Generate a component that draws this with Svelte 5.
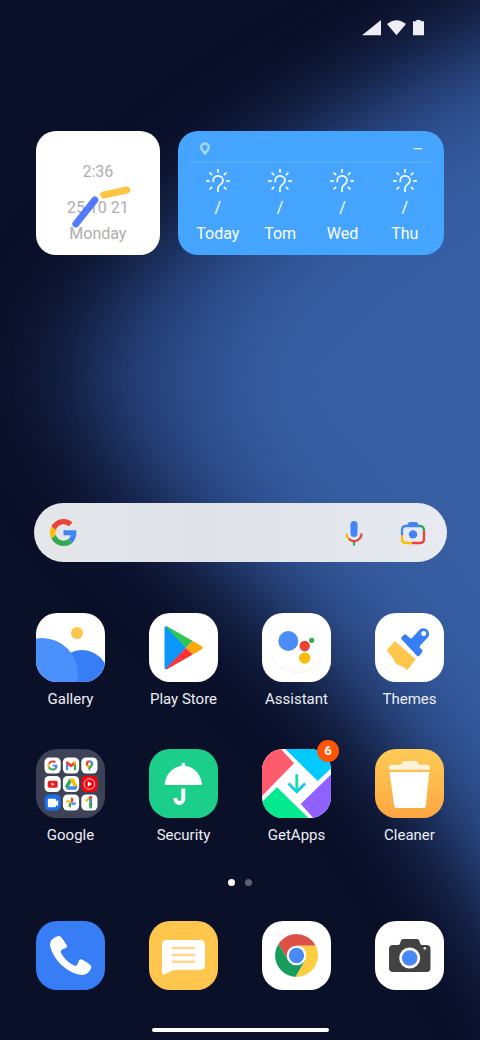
<script>
  const days = ['Today', 'Tom', 'Wed', 'Thu'];
  const apps = [
    { id: 'gallery', label: 'Gallery', bg: '#fff' },
    { id: 'play', label: 'Play Store', bg: '#fff' },
    { id: 'assistant', label: 'Assistant', bg: '#fff' },
    { id: 'themes', label: 'Themes', bg: '#fff' },
    { id: 'google', label: 'Google', bg: '#3e4256' },
    { id: 'security', label: 'Security', bg: '#1bce8a' },
    { id: 'getapps', label: 'GetApps', bg: '#fff', badge: 6 },
    { id: 'cleaner', label: 'Cleaner', bg: 'linear-gradient(#fdcb55, #fea742)' }
  ];
  const dock = [
    { id: 'phone', label: 'Phone', bg: '#377df6' },
    { id: 'messages', label: 'Messages', bg: '#fec64c' },
    { id: 'chrome', label: 'Chrome', bg: '#fff' },
    { id: 'camera', label: 'Camera', bg: '#fff' }
  ];
  const rays = [180, 225, 270, 315, 0, 135, 45];
</script>

{#snippet googleG()}
  <path fill="#ea4335" d="M24 9.5c3.54 0 6.71 1.22 9.21 3.6l6.85-6.85C35.9 2.38 30.47 0 24 0 14.62 0 6.51 5.38 2.56 13.22l7.98 6.19C12.43 13.72 17.74 9.5 24 9.5z" />
  <path fill="#4285f4" d="M46.98 24.55c0-1.57-.15-3.09-.38-4.55H24v9.02h12.94c-.58 2.96-2.26 5.48-4.78 7.18l7.73 6c4.51-4.18 7.09-10.36 7.09-17.65z" />
  <path fill="#fbbc05" d="M10.53 28.59c-.48-1.45-.76-2.99-.76-4.59s.27-3.14.76-4.59l-7.98-6.19C.92 16.46 0 20.12 0 24c0 3.88.92 7.54 2.56 10.78l7.97-6.19z" />
  <path fill="#34a853" d="M24 48c6.48 0 11.93-2.13 15.89-5.81l-7.73-6c-2.15 1.45-4.92 2.3-8.16 2.3-6.26 0-11.57-4.22-13.47-9.91l-7.98 6.19C6.51 42.62 14.62 48 24 48z" />
{/snippet}

{#snippet art(id)}
  {#if id === 'gallery'}
    <circle cx="46" cy="63" r="26" fill="#377df6" />
    <circle cx="6" cy="61" r="36" fill="#4b91fe" />
    <circle cx="41" cy="20" r="6" fill="#fcc54c" />
  {:else if id === 'play'}
    <path d="M15.500 15.500q0-3 2.800-1.800L37 34.700 18.300 56q-2.800 1-2.800-2z" fill="#0a96fa" />
    <path d="M16.600 13.600q1-.6 2.200.1L43.800 28 37 34.700z" fill="#2fc655" />
    <path d="M16.600 55.900q1 .6 2.200-.1L43.800 41.500 37 34.700z" fill="#fd3338" />
    <path d="M43.800 28l8.700 5q2.400 1.700 0 3.500l-8.700 5-6.800-6.800z" fill="#fba70f" />
  {:else if id === 'assistant'}
    <path d="M8.500 40a27 27 0 0 0 52 0" fill="none" stroke="#f1f1f1" stroke-width="1" />
    <circle cx="26.300" cy="28" r="10" fill="#4b8cf5" />
    <circle cx="42.700" cy="33" r="5.200" fill="#e94537" />
    <circle cx="49.700" cy="27.300" r="2.600" fill="#34a853" />
    <circle cx="42.700" cy="45" r="5.700" fill="#fabb0b" />
  {:else if id === 'themes'}
    <path d="M20 28l20.700 18.300-8.400 11-2.600-2.600q-2.200-.5-4.200-1.900l-3.500-1.600q-2-.7-2.700-3.100-.7-2.500-2.800-4.600L11.700 37.300z" fill="#fec64c" />
    <path d="M26.300 26q-.5-1.200.6-2.200l2-1.900q1.300-1.200 2.600 0l3.400 3.100q1.300 1 2.400-.3l7.400-8.100a5.600 5.600 0 0 1 8 7.800l-7.600 8.300q-1 1.200 0 2.200l1.600 1.400q1.400 1.400.3 2.900L44.200 43q-1 .9-2 .1z" fill="#377df6" />
    <circle cx="48.700" cy="20.400" r="2.500" fill="#fff" />
  {:else if id === 'google'}
    {#each [0, 1, 2, 3, 4, 5, 6, 7, 8] as n}
      <rect x={8.5 + (n % 3) * 18.4} y={8.4 + Math.floor(n / 3) * 18.5} width="16.200" height="16.200" rx="4.800" fill={n === 5 ? '#f5060b' : n === 6 ? '#1a6fe8' : '#fff'} />
    {/each}
    <g transform="translate(11.500 11.400) scale(.213)">{@render googleG()}</g>
    <g transform="translate(30 12)">
      <path d="M0 1.500V9h2.200V4.500z" fill="#4285f4" />
      <path d="M10 1.500V9H7.800V4.500z" fill="#34a853" />
      <path d="M0 1q1-1.300 2.200-.3L5 3 7.800.7Q9 0 10 1v1.700L5 6.500 0 2.700z" fill="#ea4335" />
      <path d="M7.800.7Q9 0 10 1v1.700L7.800 4.400z" fill="#fbbc05" />
    </g>
    <g transform="translate(49.700 11.200)">
      <path d="M0 3.700A3.700 3.700 0 0 1 3.700 0v3.700L.8 6.100Q0 5 0 3.700z" fill="#ea4335" />
      <path d="M3.700 0a3.700 3.700 0 0 1 3.700 3.700L3.700 3.700z" fill="#4285f4" />
      <path d="M7.400 3.700Q7.400 5 6.400 6.200 4.500 8 3.700 11 3 9 2.200 7.900L5 3.700z" fill="#34a853" />
      <path d="M.8 6.100L3.400 3.500 5 5 2.200 7.900z" fill="#fbbc05" />
      <circle cx="3.700" cy="3.700" r="1.300" fill="#fff" />
    </g>
    <rect x="11.700" y="31.700" width="10" height="7" rx="1.800" fill="#ed1c1c" />
    <path d="M15.700 33.500v3.300l2.900-1.600z" fill="#fff" />
    <g transform="translate(29 29.600)">
      <path d="M4.400 0L0 7.600l2 3.500 4.500-7.600z" fill="#34a853" />
      <path d="M4.400 0h4l4.400 7.600h-4z" fill="#fbbc05" />
      <path d="M4 7.600h8.800l-2 3.500H2z" fill="#4285f4" />
    </g>
    <circle cx="53.400" cy="35" r="5.300" fill="none" stroke="#fff" stroke-width=".8" />
    <path d="M51.800 32.300v5.400l4.300-2.700z" fill="#fff" />
    <path d="M11.800 51q0-1.300 1.300-1.300h5.700q1.300 0 1.300 1.300v1.500l2-1.700v6.600l-2-1.700V57q0 1.300-1.300 1.300h-5.700q-1.300 0-1.300-1.300z" fill="#fff" />
    <path d="M35 53.500v-5a2.500 2.500 0 0 1 0 5z" fill="#ea4335" />
    <path d="M35 53.500h5a2.500 2.500 0 0 1-5 0z" fill="#4285f4" />
    <path d="M35 53.500v5a2.500 2.500 0 0 1 0-5z" fill="#34a853" />
    <path d="M35 53.500h-5a2.500 2.500 0 0 1 5 0z" fill="#fbbc05" />
    <path d="M50.500 51.500l4.500-3" stroke="#fbbc05" stroke-width="2.600" stroke-linecap="round" />
    <path d="M54.700 49v9" stroke="#4285f4" stroke-width="2.800" stroke-linecap="round" />
    <path d="M54.700 54v4" stroke="#34a853" stroke-width="2.800" stroke-linecap="round" />
    <path d="M54 48.500h1" stroke="#ea4335" stroke-width="2.500" stroke-linecap="round" />
  {:else if id === 'security'}
    <path d="M16.800 36q-1.300 0-1.100-1.500C17 24.500 24.500 17.700 32.500 17v-1.300a1.900 1.900 0 0 1 3.800 0V17C44.300 17.700 51.700 24.500 53 34.500q.2 1.500-1.100 1.500z" fill="#fff" />
    <path d="M34.300 39.400V50a3.900 3.900 0 0 1-7.800 0v-1" fill="none" stroke="#fff" stroke-width="4" />
  {:else if id === 'getapps'}
    <path d="M0 0h19l13 14.300L0 47z" fill="#fe5c6c" />
    <path d="M23.300 0l32.400 32L70 18.500V0z" fill="#03cafe" />
    <path d="M70 24.500L38.700 55l13.500 15H70z" fill="#8f61fe" />
    <path d="M15 38.300L0 53v17h47.500z" fill="#03e98f" />
    <path d="M26.500 34.500l8.300 8.300 8.300-8.300" fill="none" stroke="#14c8ec" stroke-width="2.800" />
    <path d="M34.800 25.300v17" fill="none" stroke="#13e0a2" stroke-width="2.800" />
  {:else if id === 'cleaner'}
    <path d="M13.800 20.800v-2.300q0-2.700 3-2.700h8.400q1 0 1.500-1.200l.5-1.200q.6-1.300 2-1.300h11.600q1.400 0 2 1.300l.5 1.200q.5 1.200 1.500 1.200H52q3 0 3 2.700v2.300z" fill="#fff4d8" />
    <path d="M14.600 23h39.600l-3.400 34q-.2 2-2.200 2H21.400q-2 0-2.200-2z" fill="#fff" />
  {:else if id === 'phone'}
    <path d="M22 15.100q1.800-.7 3 .8 3.500 4.200 5.900 8.600.7 1.600-.8 2.300l-4.300 1.900q-1.700 1-1 3c3 5.800 8 10.300 13.800 13 1.700.5 2.600-.5 3.100-2l1.400-3.200q.8-1.800 2.700-1.100 5 2.300 8.600 5.500 1.600 1.600.7 3.400-3 6.900-9.300 6.700C31.500 52.500 16.500 38.500 14 24q-.4-6 8-8.900z" fill="#fff" />
  {:else if id === 'messages'}
    <path d="M18 19h33q5 0 5 5v19.700q0 5-5 5H28q-5 .4-10.500 3.700-2 1.100-3 .9-1.500 0-1.500-1.600V24q0-5 5-5z" fill="#fff" />
    <path d="M22.800 27h23.500M22.800 34h23.500M22.800 40.800h23.500" stroke="#ffd88c" stroke-width="2.600" />
  {:else if id === 'chrome'}
    <path d="M16.500 22.900a21.500 21.500 0 0 1 37.100 1.800H34.500v9.800L26 39.400z" fill="#dc5045" />
    <path d="M53.600 24.700a21.500 21.500 0 0 1-20.200 31.200L43 39.400l-8.500-4.900v-9.800z" fill="#fecd42" />
    <path d="M33.400 55.900a21.500 21.500 0 0 1-16.900-33L26 39.400l8.500-4.900 8.500 4.900z" fill="#179e5c" />
    <circle cx="34.500" cy="34.500" r="9.800" fill="#fff" />
    <circle cx="34.500" cy="34.500" r="7.700" fill="#4989f5" />
  {:else if id === 'camera'}
    <path d="M18 24h5q1.500 0 2-1.500l1-3q.5-1.500 2.200-1.500H42q1.700 0 2.200 1.500l1 3q.5 1.500 2 1.500h4.300q4 0 4 4v19q0 4-4 4H18q-4 0-4-4V28q0-4 4-4z" fill="#424242" />
    <circle cx="34.700" cy="37" r="10.500" fill="#fff" />
    <circle cx="34.700" cy="37" r="7.800" fill="#4688f6" />
    <circle cx="49.800" cy="27.300" r="1.400" fill="#ddd" />
  {/if}
{/snippet}

{#snippet tile(app)}
  <span class="tile" style:background={app.bg}>
    <svg viewBox="0 0 69 69" aria-hidden="true">{@render art(app.id)}</svg>
  </span>
{/snippet}

<main class="home">
  <svg class="wallpaper" viewBox="0 0 480 1040" preserveAspectRatio="none" aria-hidden="true">
    <defs>
      <filter id="wide" x="-50%" y="-50%" width="200%" height="200%" color-interpolation-filters="sRGB">
        <feGaussianBlur stdDeviation="48" />
      </filter>
      <filter id="core" x="-50%" y="-50%" width="200%" height="200%" color-interpolation-filters="sRGB">
        <feGaussianBlur stdDeviation="58" />
      </filter>
    </defs>
    <path filter="url(#wide)" fill="#233c73" d="M65 360Q120 250 310 130Q420 70 520 10L800-100V1250H680Q530 940 420 780Q320 640 200 550Q75 450 65 360z" />
    <path filter="url(#core)" fill="#375ea3" d="M180 350Q220 260 350 170Q440 100 560 60L800 0V1100H640Q530 890 430 740Q340 610 250 520Q175 440 180 350z" />
  </svg>

  <header class="status">
    <svg width="62" height="16" viewBox="0 0 62 16" fill="#eceef4" aria-hidden="true">
      <path d="M0 15.200L19 0v15.200z" />
      <path d="M25 4Q34.500-3.600 44 4L34.500 15.200z" />
      <path d="M51 1.300h3.300V0h4.400v1.300H62v14H51z" />
    </svg>
  </header>

  <section class="widgets">
    <div class="clock">
      <span class="time">2:36</span>
      <span>25 10 21</span>
      <span>Monday</span>
      <svg class="hands" viewBox="0 0 124 124" fill="none" stroke-width="7" stroke-linecap="round" aria-hidden="true">
        <path d="M40 93l19-24" stroke="#3c69ff" stroke-opacity=".88" />
        <path d="M68 64l23-5" stroke="#fdc546" />
      </svg>
    </div>
    <div class="weather">
      <div class="place">
        <svg width="12" height="14" viewBox="0 0 12 14" aria-hidden="true">
          <path d="M6 1.500a3.800 3.800 0 0 1 3.800 3.800C9.800 7.500 8 8.800 6 11.300 4 8.800 2.200 7.500 2.200 5.300A3.800 3.800 0 0 1 6 1.500z" fill="none" stroke="#a6d4ff" stroke-width="2.400" />
          <path d="M3 9h6l-3 4.500z" fill="#a6d4ff" />
        </svg>
        <span>--</span>
      </div>
      <div class="days">
        {#each days as day}
          <div class="day">
            <svg width="24" height="24" viewBox="0 0 24 24" fill="none" stroke="#fff" stroke-width="1.700" aria-hidden="true">
              {#each rays as r}
                <path d="M20.300 12H24" transform={`rotate(${r} 12 12)`} />
              {/each}
              <path d="M7.300 13.200C6.400 9 9 6.900 12 6.900c3.200 0 5 2.200 5 4.600 0 2.800-2 3.700-3.300 4.700-1.400 1-1.700 2-1.700 3.200V23" />
            </svg>
            <span class="temp">/</span>
            <span>{day}</span>
          </div>
        {/each}
      </div>
    </div>
  </section>

  <form class="search" onsubmit={(e) => e.preventDefault()}>
    <svg width="27" height="27" viewBox="0 0 48 48" aria-hidden="true">{@render googleG()}</svg>
    <input type="text" aria-label="Search" />
    <button type="button" aria-label="Voice search">
      <svg width="18" height="26" viewBox="0 0 18 26" fill="none" aria-hidden="true">
        <rect x="5.500" y="1" width="7" height="16" rx="3.500" fill="#4285f4" />
        <path d="M9 20v5.500" stroke="#34a853" stroke-width="2.200" />
        <path d="M1.500 13.500A7.500 7.500 0 0 0 3.700 18.800" stroke="#fbbc05" stroke-width="2.200" />
        <path d="M3.700 18.800A7.500 7.500 0 0 0 16.500 13.500" stroke="#ea4335" stroke-width="2.200" />
      </svg>
    </button>
    <button type="button" aria-label="Search with camera">
      <svg width="26" height="24" viewBox="0 0 26 24" fill="none" stroke-width="2.400" aria-hidden="true">
        <path d="M2 14V9q0-4 4-4h13" stroke="#4285f4" />
        <path d="M6.500 5l2-3.300Q9 1 10 1h6q1 0 1.500.7l2 3.300z" fill="#4285f4" />
        <path d="M19 5h1q4 0 4 5" stroke="#34a853" />
        <path d="M2 14v4q0 4 4 4h6" stroke="#fbbc05" />
        <path d="M24 10v8q0 4-4 4h-8" stroke="#ea4335" />
        <circle cx="13" cy="13.400" r="4.200" fill="#4285f4" />
      </svg>
    </button>
  </form>

  <section class="apps">
    {#each apps as app}
      <button type="button" class="app">
        {@render tile(app)}
        <span class="label">{app.label}</span>
        {#if app.badge}<span class="badge">{app.badge}</span>{/if}
      </button>
    {/each}
  </section>

  <div class="pages" aria-hidden="true"><i class="on"></i><i></i></div>

  <nav class="dock">
    {#each dock as app}
      <button type="button" class="app" aria-label={app.label}>{@render tile(app)}</button>
    {/each}
  </nav>

  <div class="bar"></div>
</main>

<style>
  :global(body) {
    background: #0b1029;
  }
  .home {
    position: relative;
    z-index: 0;
    box-sizing: border-box;
    min-height: 100vh;
    display: flex;
    flex-direction: column;
    padding: 20px 36px 8px;
    overflow: hidden;
    font-family: Roboto, sans-serif;
    font-size: 16px;
    line-height: 20px;
    color: #fff;
    background: #0b1029;
  }
  .wallpaper {
    position: absolute;
    inset: 0;
    z-index: -1;
    width: 100%;
    height: 100%;
  }
  button {
    border: 0;
    padding: 0;
    background: none;
    font: inherit;
    color: inherit;
  }
  svg {
    display: block;
  }
  .status {
    display: flex;
    justify-content: flex-end;
    padding-right: 20px;
  }
  .widgets {
    display: grid;
    grid-template-columns: 124fr 267fr;
    gap: 18px;
    margin-top: 95px;
  }
  .clock,
  .weather {
    height: 124px;
    box-sizing: border-box;
    border-radius: 20px;
  }
  .clock {
    position: relative;
    display: flex;
    flex-direction: column;
    align-items: center;
    justify-content: flex-end;
    gap: 6px;
    padding-bottom: 11px;
    background: #fff;
    color: #aeaeae;
  }
  .time {
    margin-bottom: 10px;
  }
  .hands {
    position: absolute;
    inset: 0;
    width: 100%;
    height: 100%;
  }
  .weather {
    padding: 4px 12px 0;
    background: #45a5fe;
  }
  .place {
    display: flex;
    align-items: center;
    justify-content: space-between;
    height: 27px;
    padding: 0 10px 0 9px;
    border-bottom: 1px solid #5fb2ff;
  }
  .days {
    display: grid;
    grid-template-columns: repeat(4, 1fr);
    margin: 0 -4px 0 -3px;
  }
  .day {
    display: flex;
    flex-direction: column;
    align-items: center;
    padding-top: 6px;
  }
  .temp {
    margin: 5px 0 6px;
  }
  .search {
    display: flex;
    align-items: center;
    gap: 37px;
    height: 59px;
    box-sizing: border-box;
    margin: 248px -3px 0 -2px;
    padding: 0 21px 0 16px;
    border-radius: 30px;
    background: linear-gradient(90deg, #e5e7ea, #dfe3e9 40%, #e7ebf1);
  }
  .search input {
    flex: 1;
    min-width: 0;
    border: 0;
    outline: 0;
    background: none;
    font: inherit;
  }
  .apps {
    display: grid;
    grid-template-columns: repeat(4, 69px);
    justify-content: space-between;
    row-gap: 40px;
    margin-top: 51px;
  }
  .app {
    position: relative;
    display: flex;
    flex-direction: column;
    align-items: center;
    gap: 7px;
    font-size: 15px;
  }
  .tile {
    display: block;
    width: 69px;
    height: 69px;
    border-radius: 21px;
    overflow: hidden;
  }
  .label {
    white-space: nowrap;
    color: #eceef4;
  }
  .badge {
    position: absolute;
    top: -9px;
    right: -8px;
    width: 22px;
    border-radius: 11px;
    background: #ff5406;
    font-size: 13px;
    font-weight: 700;
    line-height: 22px;
  }
  .pages {
    display: flex;
    justify-content: center;
    gap: 10px;
    margin-top: 34px;
  }
  .pages i {
    width: 7px;
    height: 7px;
    border-radius: 50%;
    background: #5c6070;
  }
  .pages .on {
    background: #fff;
  }
  .dock {
    display: flex;
    justify-content: space-between;
    margin-top: 35px;
  }
  .bar {
    align-self: center;
    width: 177px;
    height: 4px;
    margin-top: auto;
    border-radius: 2px;
    background: #fff;
  }
</style>
